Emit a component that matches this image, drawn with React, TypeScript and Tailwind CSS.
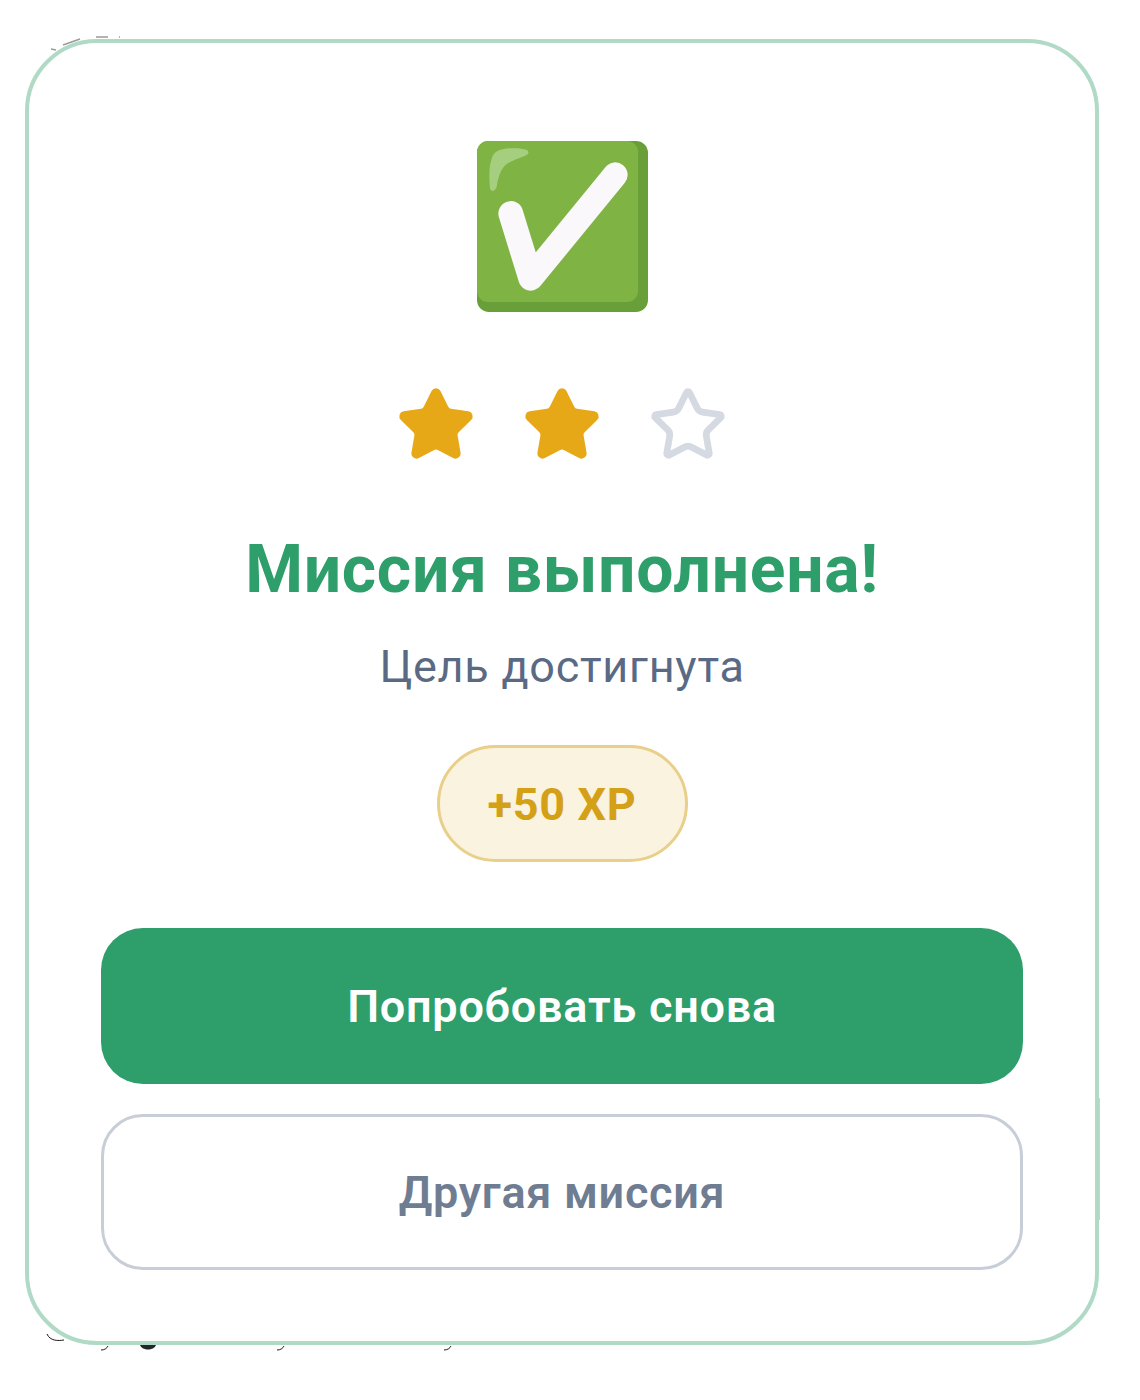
import { Star } from 'lucide-react'

const roboto = 'font-[Roboto,sans-serif]'

// green check emoji, drawn because no emoji font is available
function CheckBox() {
  return (
    <svg width="171" height="171" viewBox="0 0 172 172" className="ml-px block">
      <rect width="172" height="172" rx="12" fill="#689f38" />
      <rect width="162" height="162" rx="11" fill="#7fb344" />
      <path
        d="M13 47C12 35 12 25 15 17C17 11 22 8.5 30 7.5C37 7 46 7 50 9C53 10.5 52 13 49 14.5C40 18 31 21 27 26C23 31 21 38 20 45C19 51 14 52 13 47Z"
        fill="#a5cf7f"
      />
      <polyline
        points="34,73 54,138 139,34"
        fill="none"
        stroke="#faf8fb"
        strokeWidth="25"
        strokeLinecap="round"
        strokeLinejoin="round"
      />
    </svg>
  )
}

// stray marks that show just outside the card edge
function EdgeMarks() {
  return (
    <svg width="1140" height="1400" className="absolute left-0 top-0" fill="none">
      <g stroke="#9a9a9a" strokeWidth="1.5">
        <path d="M51 49L56 50" />
        <path d="M63 45L80 39" />
        <path d="M96 37L108 37" />
        <path d="M119 37L120 37" />
      </g>
      <g stroke="#1a1a1a" strokeWidth="1">
        <path d="M47 1334C50 1341 58 1341 64 1340" />
        <path d="M101 1350C105 1350 107 1348 108 1346" />
        <path d="M277 1350C281 1350 283 1348 284 1346" />
        <path d="M444 1350C448 1350 450 1348 451 1346" />
      </g>
      <path d="M140 1345C142 1351 154 1351 156 1345Z" fill="#22282a" />
      <path d="M1099.5 1098V1220" stroke="#b8dccb" strokeWidth="1" />
    </svg>
  )
}

export default function App() {
  return (
    <main className={`relative min-h-[1400px] bg-white px-[25px] pt-[39px] ${roboto}`}>
      <EdgeMarks />
      <div className="relative flex h-[1306px] w-[1074px] flex-col items-center rounded-[72px] border-4 border-[#b0dac6] bg-white px-[72px] pt-[98px]">
        <CheckBox />
        <div className="mt-[73px] flex gap-[46px]">
          <Star size={80} className="text-[#e6a817]" fill="currentColor" />
          <Star size={80} className="text-[#e6a817]" fill="currentColor" />
          <Star size={80} className="text-[#d5d9e1]" />
        </div>
        <h1 className="mt-[65px] text-[66px] font-bold leading-[80px] tracking-[0.7px] text-[#2e9e6b]">Миссия выполнена!</h1>
        <p className="mt-[32px] text-[45px] leading-[50px] tracking-[0.73px] text-[#5a6a85]">Цель достигнута</p>
        <div className="mt-[53px] flex h-[117px] w-[251px] items-center justify-center rounded-full border-[3px] border-[#e8d08a] bg-[#faf3e0] pt-[2px] text-[45px] font-bold tracking-[0.7px] text-[#d4a017]">
          +50 XP
        </div>
        <button className="mt-[66px] h-[156px] w-full rounded-[42px] bg-[#2e9e6b] pt-[2px] text-[45px] font-semibold tracking-[0.75px] text-white">
          Попробовать снова
        </button>
        <button className="mt-[30px] h-[156px] w-full rounded-[42px] border-[3px] border-[#c8ced8] bg-white pt-[2px] text-[45px] font-semibold tracking-[0.7px] text-[#6f7d93]">
          Другая миссия
        </button>
      </div>
    </main>
  )
}
